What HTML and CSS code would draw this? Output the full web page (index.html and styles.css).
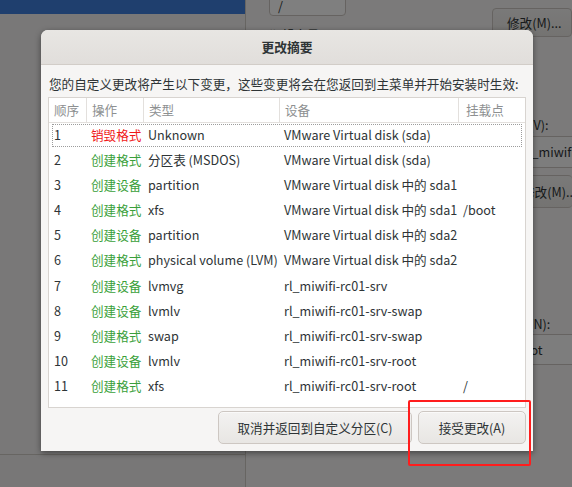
FILE: index.html
```html
<!DOCTYPE html>
<html lang="zh-CN">
<head>
<meta charset="utf-8">
<title>更改摘要</title>
<link rel="stylesheet" href="styles.css">
</head>
<body>
<div class="screen">
  <aside class="left">
    <div class="bluebar"></div>
    <div class="leftbody"></div>
    <div class="leftfoot"></div>
  </aside>
  <main class="right">
    <div class="toprow">
      <div class="colA">
        <div class="field">/</div>
        <div class="faint">期望容量(D):</div>
      </div>
      <div class="bgbtn top">修改(M)...</div>
    </div>
    <div class="col2">
      <div class="lbl">卷组(V):</div>
      <div class="inp">rl_miwifi-rc01-srv</div>
      <div class="bgbtn mid">修改(M)...</div>
      <div class="lbl lbl-n">名称(N):</div>
      <div class="inp inp2">root</div>
    </div>
  </main>
  <div class="dim"></div>

  <section class="dialog">
    <header class="dlg-head">更改摘要</header>
    <div class="dlg-body">
      <p class="intro">您的自定义更改将产生以下变更，这些变更将会在您返回到主菜单并开始安装时生效:</p>
      <div class="tbl">
        <div class="row hdr">
          <div>顺序</div><div>操作</div><div>类型</div><div>设备</div><div>挂载点</div>
        </div>
        <div class="row focus"><div>1</div><div class="red">销毁格式</div><div>Unknown</div><div>VMware Virtual disk (sda)</div><div></div></div>
        <div class="row"><div>2</div><div class="green">创建格式</div><div>分区表 (MSDOS)</div><div>VMware Virtual disk (sda)</div><div></div></div>
        <div class="row"><div>3</div><div class="green">创建设备</div><div>partition</div><div>VMware Virtual disk 中的 sda1</div><div></div></div>
        <div class="row"><div>4</div><div class="green">创建格式</div><div>xfs</div><div>VMware Virtual disk 中的 sda1</div><div>/boot</div></div>
        <div class="row"><div>5</div><div class="green">创建设备</div><div>partition</div><div>VMware Virtual disk 中的 sda2</div><div></div></div>
        <div class="row"><div>6</div><div class="green">创建格式</div><div>physical volume (LVM)</div><div>VMware Virtual disk 中的 sda2</div><div></div></div>
        <div class="row"><div>7</div><div class="green">创建设备</div><div>lvmvg</div><div>rl_miwifi-rc01-srv</div><div></div></div>
        <div class="row"><div>8</div><div class="green">创建设备</div><div>lvmlv</div><div>rl_miwifi-rc01-srv-swap</div><div></div></div>
        <div class="row"><div>9</div><div class="green">创建格式</div><div>swap</div><div>rl_miwifi-rc01-srv-swap</div><div></div></div>
        <div class="row"><div>10</div><div class="green">创建设备</div><div>lvmlv</div><div>rl_miwifi-rc01-srv-root</div><div></div></div>
        <div class="row"><div>11</div><div class="green">创建格式</div><div>xfs</div><div>rl_miwifi-rc01-srv-root</div><div>/</div></div>
      </div>
      <div class="actions">
        <button class="btn btn-cancel">取消并返回到自定义分区(C)</button>
        <button class="btn btn-accept">接受更改(A)</button>
      </div>
    </div>
  </section>

  <div class="annot"></div>
</div>
</body>
</html>
```

FILE: styles.css
```css
* { box-sizing: border-box; }
html, body { margin: 0; padding: 0; }
body {
  width: 572px;
  height: 487px;
  overflow: hidden;
  font-family: "Noto Sans CJK SC", "Noto Sans", sans-serif;
  font-size: 12.6px;
  color: #2e3436;
}
.screen {
  position: relative;
  width: 572px;
  height: 487px;
  display: flex;
  overflow: hidden;
  background: #f6f5f4;
}

/* ---------- background page ---------- */
.left {
  width: 246px;
  flex: none;
  display: flex;
  flex-direction: column;
  border-right: 1px solid #cfcac5;
}
.bluebar { height: 14px; background: #3e7edd; }
.leftbody { flex: 1; background: #f2f1f0; }
.leftfoot { height: 33px; border-top: 1px solid #cfcac5; background: #f0efee; }

.right {
  flex: 1;
  min-width: 0;
  display: flex;
  flex-direction: column;
}
.toprow {
  display: flex;
  margin-top: -8px;
}
.colA { margin-left: 23px; width: 84px; }
.field {
  height: 24px;
  border: 1px solid #cdc7c2;
  border-radius: 4px;
  background: #fff;
  padding: 0 8px;
  line-height: 26px;
}
.faint {
  margin-top: 10px;
  line-height: 18px;
  white-space: nowrap;
  color: #2e3436;
}
.bgbtn {
  border: 1px solid #cdc7c2;
  border-radius: 4px;
  background: linear-gradient(#f4f3f2, #e9e7e4);
  white-space: nowrap;
  flex: none;
}
.bgbtn.top {
  margin-left: 146px;
  margin-top: 16px;
  height: 29px;
  width: 80px;
  padding-left: 14px;
  line-height: 27px;
}
.col2 {
  margin-left: 258px;
  margin-top: 72px;
  display: flex;
  flex-direction: column;
}
.lbl { line-height: 18px; white-space: nowrap; }
.inp {
  margin-top: 2px;
  height: 32px;
  border-top: 1px solid #cdc7c2;
  border-bottom: 1px solid #cdc7c2;
  background: #fbfafa;
  padding-left: 19px;
  line-height: 30px;
  white-space: nowrap;
  overflow: hidden;
}
.bgbtn.mid {
  margin-top: 7px;
  height: 33px;
  padding-left: 17px;
  line-height: 31px;
  border-right: none;
  overflow: hidden;
}
.lbl-n { margin-top: 107px; }
.inp2 { margin-top: 1px; height: 31px; padding-left: 14px; }

.dim {
  position: absolute;
  inset: 0;
  background: rgba(0, 0, 0, 0.5);
}

/* ---------- dialog ---------- */
.dialog {
  position: absolute;
  left: 41px;
  top: 30px;
  width: 492px;
  height: 421px;
  background: #f6f5f4;
  border-radius: 7px 7px 0 0;
  box-shadow: 0 2px 6px rgba(0, 0, 0, 0.45);
  display: flex;
  flex-direction: column;
  overflow: hidden;
}
.dlg-head {
  height: 35px;
  flex: none;
  background: linear-gradient(#e8e6e3, #e1dedb);
  border-bottom: 1px solid #d2cdc8;
  text-align: center;
  line-height: 34px;
  font-weight: bold;
  font-size: 12.8px;
  color: #2e3436;
}
.dlg-body {
  flex: 1;
  padding: 9px 7px 0 7px;
  display: flex;
  flex-direction: column;
}
.intro {
  margin: 0 0 0 1px;
  line-height: 20px;
  white-space: nowrap;
}
.tbl {
  margin-top: 3px;
  height: 311px;
  background: #fff;
  border: 1px solid #d8d4d0;
  display: flex;
  flex-direction: column;
}
.row {
  display: grid;
  grid-template-columns: 38px 57px 136px 179px 1fr;
  height: 25.1px;
  line-height: 24px;
  position: relative;
  white-space: nowrap;
}
.row > div { padding-left: 4px; overflow: hidden; }
.row > div:first-child { padding-left: 5px; }
.row.hdr {
  height: 25px;
  line-height: 24px;
  color: #8d9091;
  border-bottom: 1px solid #e3e0dd;
}
.row.hdr > div { border-right: 1px solid #e3e0dd; padding-left: 5px; }
.row.hdr > div:last-child { border-right: none; padding-left: 7px; }
.row.focus::after {
  content: "";
  position: absolute;
  left: 3px;
  right: 3px;
  top: 1px;
  bottom: 1px;
  border: 1px dotted #9c9c9c;
}
.red { color: #f01818; }
.green { color: #3a9f3a; }

.actions {
  display: flex;
  justify-content: flex-end;
  gap: 6px;
  padding-top: 3px;
}
.btn {
  font-family: inherit;
  font-size: 12.6px;
  color: #2e3436;
  height: 33px;
  border: 1px solid #cdc7c2;
  border-radius: 5px;
  background: linear-gradient(#f3f2f1, #e8e6e3);
  box-shadow: 0 1px 0 rgba(255,255,255,0.6) inset;
  padding: 0;
}
.btn-cancel { width: 194px; }
.btn-accept { width: 108px; }

.annot {
  position: absolute;
  left: 408px;
  top: 400px;
  width: 123px;
  height: 66px;
  border: 2px solid #ff1d1d;
  border-radius: 2px;
}
```
